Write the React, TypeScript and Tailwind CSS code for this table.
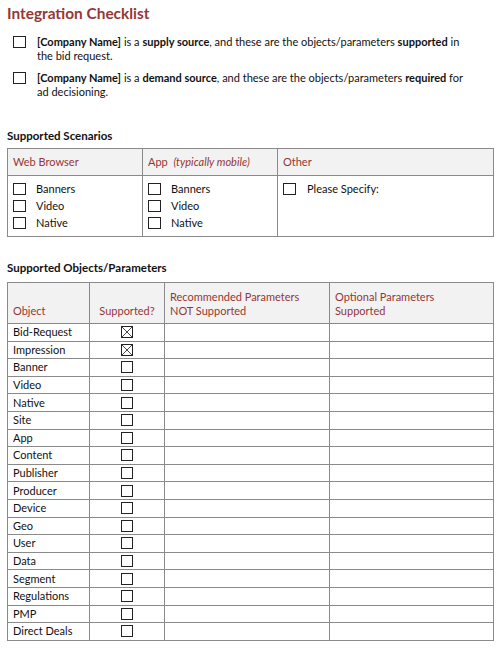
import React from "react";

const RED = "text-[#953735]";

function Box({ checked = false, size = "w-[13px] h-[12px]" }: { checked?: boolean; size?: string }) {
  return (
    <span className={`inline-block ${size} border border-[#222] relative shrink-0 bg-white`}>
      {checked && (
        <svg viewBox="0 0 12 12" className="absolute inset-0 w-full h-full" preserveAspectRatio="none">
          <line x1="0" y1="0" x2="12" y2="12" stroke="#222" strokeWidth="1" />
          <line x1="12" y1="0" x2="0" y2="12" stroke="#222" strokeWidth="1" />
        </svg>
      )}
    </span>
  );
}

const objects = [
  "Bid-Request",
  "Impression",
  "Banner",
  "Video",
  "Native",
  "Site",
  "App",
  "Content",
  "Publisher",
  "Producer",
  "Device",
  "Geo",
  "User",
  "Data",
  "Segment",
  "Regulations",
  "PMP",
  "Direct Deals",
];

export default function App() {
  return (
    <div
      className="w-[500px] h-[651px] bg-white text-[#111] text-[11px] overflow-hidden"
      style={{ fontFamily: "Lato, 'Open Sans', sans-serif" }}
    >
      <div className="pl-[7px] pr-[7px]">
        <h1 className={`pt-[3px] text-[15.4px] leading-[20px] font-bold ${RED}`}>Integration Checklist</h1>

        <div className="mt-[13px] flex flex-col gap-[9px] pl-[6px]">
          <div className="flex">
            <Box />
            <p className="ml-[11px] leading-[14px] w-[430px] -mt-[1px]">
              <b>[Company Name]</b> is a <b>supply source</b>, and these are the objects/parameters{" "}
              <b>supported</b> in the bid request.
            </p>
          </div>
          <div className="flex">
            <Box />
            <p className="ml-[11px] leading-[14px] w-[430px] -mt-[1px]">
              <b>[Company Name]</b> is a <b>demand source</b>, and these are the objects/parameters{" "}
              <b>required</b> for ad decisioning.
            </p>
          </div>
        </div>

        <h2 className="mt-[30px] font-bold text-[11.5px] leading-[14px]">Supported Scenarios</h2>

        <table className="mt-[5px] w-[486px] border-collapse table-fixed">
          <colgroup>
            <col className="w-[135px]" />
            <col className="w-[135px]" />
            <col className="w-[216px]" />
          </colgroup>
          <thead>
            <tr className="h-[27px] bg-[#f2f2f2]">
              <th className={`border border-[#8a8a8a] text-left font-normal px-[5px] ${RED}`}>Web Browser</th>
              <th className={`border border-[#8a8a8a] text-left font-normal px-[5px] ${RED}`}>
                App&nbsp; <i>(typically mobile)</i>
              </th>
              <th className={`border border-[#8a8a8a] text-left font-normal px-[5px] ${RED}`}>Other</th>
            </tr>
          </thead>
          <tbody>
            <tr className="h-[61px]">
              <td className="border border-[#8a8a8a] align-top px-[5px] pt-[7px]">
                <div className="flex flex-col gap-[5px]">
                  {["Banners", "Video", "Native"].map((t) => (
                    <div key={t} className="flex items-center h-[12px]">
                      <Box />
                      <span className="ml-[10px]">{t}</span>
                    </div>
                  ))}
                </div>
              </td>
              <td className="border border-[#8a8a8a] align-top px-[5px] pt-[7px]">
                <div className="flex flex-col gap-[5px]">
                  {["Banners", "Video", "Native"].map((t) => (
                    <div key={t} className="flex items-center h-[12px]">
                      <Box />
                      <span className="ml-[10px]">{t}</span>
                    </div>
                  ))}
                </div>
              </td>
              <td className="border border-[#8a8a8a] align-top px-[5px] pt-[7px]">
                <div className="flex items-center h-[12px]">
                  <Box />
                  <span className="ml-[11px]">Please Specify:</span>
                </div>
              </td>
            </tr>
          </tbody>
        </table>

        <h2 className="mt-[24px] font-bold text-[11.5px] leading-[14px]">Supported Objects/Parameters</h2>

        <table className="mt-[7px] w-[486px] border-collapse table-fixed">
          <colgroup>
            <col className="w-[82px]" />
            <col className="w-[75px]" />
            <col className="w-[165px]" />
            <col className="w-[164px]" />
          </colgroup>
          <thead>
            <tr className="h-[41px] bg-[#f2f2f2]">
              <th className={`border border-[#8a8a8a] text-left font-normal px-[5px] align-bottom pb-[5px] leading-[14px] ${RED}`}>
                Object
              </th>
              <th className={`border border-[#8a8a8a] text-center font-normal px-[3px] align-bottom pb-[5px] leading-[14px] ${RED}`}>
                Supported?
              </th>
              <th className={`border border-[#8a8a8a] text-left font-normal px-[5px] align-bottom pb-[5px] leading-[14px] ${RED}`}>
                Recommended Parameters
                <br />
                NOT Supported
              </th>
              <th className={`border border-[#8a8a8a] text-left font-normal px-[5px] align-bottom pb-[5px] leading-[14px] ${RED}`}>
                Optional Parameters
                <br />
                Supported
              </th>
            </tr>
          </thead>
          <tbody>
            {objects.map((o, i) => (
              <tr key={o} className="h-[17.6px]">
                <td className="border border-[#8a8a8a] px-[5px] py-0 leading-[14px]">{o}</td>
                <td className="border border-[#8a8a8a] p-0">
                  <div className="flex justify-center">
                    <Box checked={i < 2} size="w-[12px] h-[12px]" />
                  </div>
                </td>
                <td className="border border-[#8a8a8a]" />
                <td className="border border-[#8a8a8a]" />
              </tr>
            ))}
          </tbody>
        </table>
      </div>
    </div>
  );
}
